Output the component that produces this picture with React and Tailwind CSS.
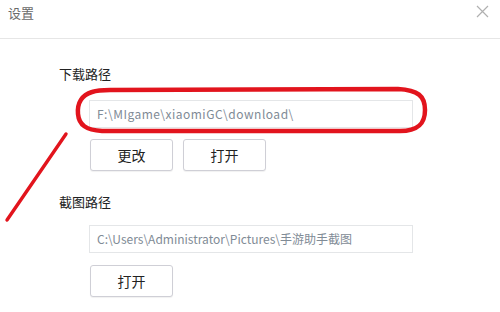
import React from "react";

const font = { fontFamily: '"Microsoft YaHei", "Noto Sans CJK SC", "Noto Sans", sans-serif' };

function Btn({ children }) {
  return (
    <button className="w-[83px] h-[32px] bg-white border border-[#cfcfd6] rounded-[3px] text-[14px] text-[#222] shadow-[0_1px_1px_rgba(0,0,0,0.06)] flex items-center justify-center">
      {children}
    </button>
  );
}

function PathInput({ value, wide }) {
  return (
    <div className={"w-[324px] h-[28px] border border-[#e4e6e8] bg-white flex items-center pl-[7px] text-[12px] text-[#7f8b96] " + (wide ? "tracking-[0.5px]" : "tracking-[0px]")}>
      {value}
    </div>
  );
}

export default function App() {
  return (
    <div className="relative w-[500px] h-[312px] bg-white overflow-hidden" style={font}>
      <div className="h-[39px] flex items-start justify-between pl-[8px] pr-[11px] border-b border-[#e6e6e6]">
        <span className="mt-[4px] text-[13px] leading-[18px] text-[#6a6a6a]">设置</span>
        <svg className="mt-[5px]" width="13" height="13" viewBox="0 0 13 13">
          <path d="M1 1 L12 12 M12 1 L1 12" stroke="#b0b0b0" strokeWidth="1.2" fill="none" />
        </svg>
      </div>
      <div className="flex flex-col pl-[59px]">
        <div className="mt-[25px] text-[13px] leading-[20px] text-[#222]">下载路径</div>
        <div className="mt-[16px] ml-[30px] flex flex-col gap-[11px]">
          <PathInput wide value={"F:\\MIgame\\xiaomiGC\\download\\"} />
          <div className="flex gap-[10px] ml-[1px]">
            <Btn>更改</Btn>
            <Btn>打开</Btn>
          </div>
        </div>
        <div className="mt-[21px] text-[13px] leading-[20px] text-[#222]">截图路径</div>
        <div className="mt-[13px] ml-[30px] flex flex-col gap-[12px]">
          <PathInput value={"C:\\Users\\Administrator\\Pictures\\手游助手截图"} />
          <div className="flex ml-[1px]">
            <Btn>打开</Btn>
          </div>
        </div>
      </div>
      <svg className="absolute inset-0 pointer-events-none" width="500" height="312" viewBox="0 0 500 312">
        <path
          d="M 92 92 C 82 95, 77 103, 78 114 C 79 125, 86 130, 102 131 L 400 131 C 418 131, 425 124, 425 110 C 425 96, 418 90, 398 89 L 110 90 C 100 90, 95 91, 92 92 Z"
          stroke="#e2141d"
          strokeWidth="4.5"
          fill="none"
        />
        <path d="M 66 134 L 7 220" stroke="#e2141d" strokeWidth="3.4" strokeLinecap="round" fill="none" />
      </svg>
    </div>
  );
}
